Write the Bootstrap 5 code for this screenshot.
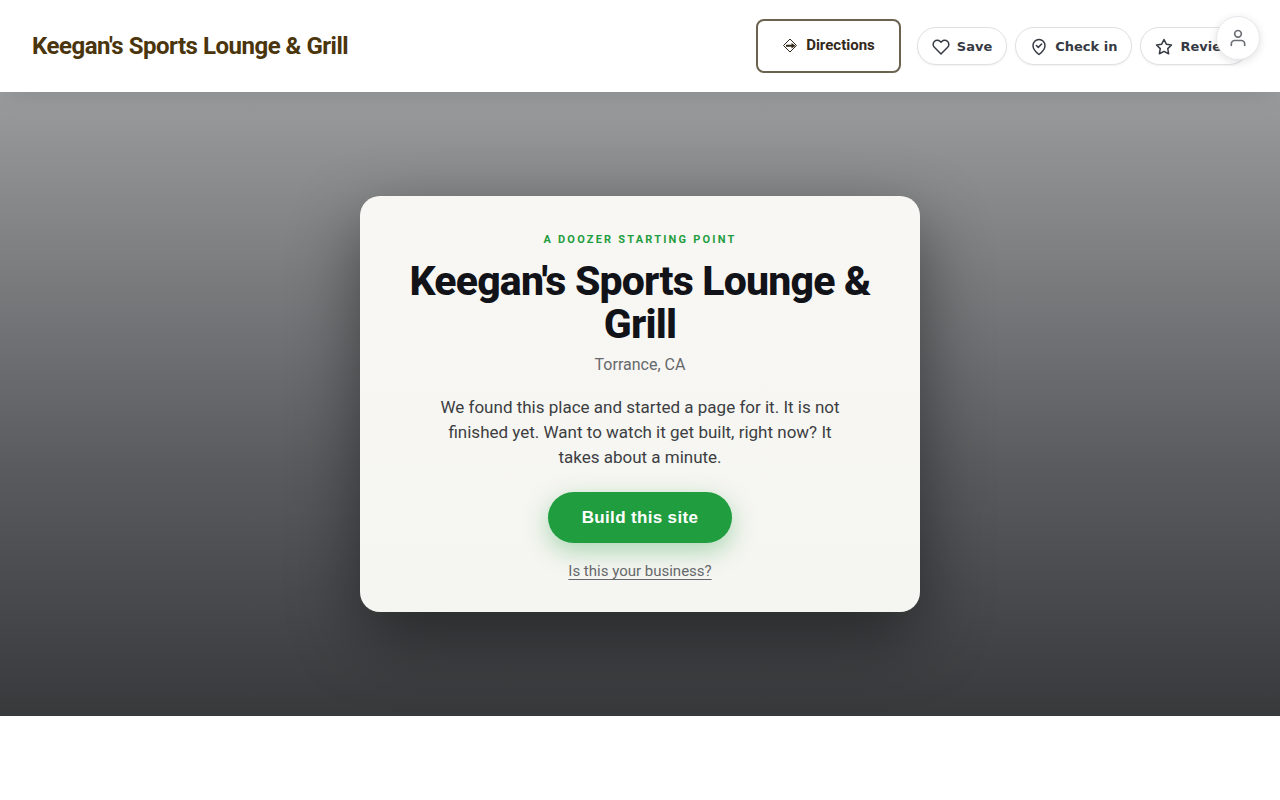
<!DOCTYPE html>
<html lang="en">
<head>
<meta charset="utf-8">
<meta name="viewport" content="width=device-width, initial-scale=1">
<title>Keegan's Sports Lounge &amp; Grill</title>
<link href="https://cdn.jsdelivr.net/npm/bootstrap@5.3.0/dist/css/bootstrap.min.css" rel="stylesheet">
<style>
  body { font-family: Roboto, sans-serif; background: #fff; }
  .site-header { padding: 19px 32px; box-shadow: 0 8px 24px -8px rgba(0,0,0,.12); position: relative; z-index: 2; }
  .site-brand { font-size: 24px; line-height: 36px; font-weight: 700; letter-spacing: -.02em; color: #4a350c; }
  .btn-directions { border: 2px solid #6b6350; border-radius: 8px; padding: 14px 24px 16px; font-size: 15px; line-height: 20px; font-weight: 700; color: #33291a; }
  .btn-pill { gap: 7px; font-family: "DejaVu Sans", sans-serif; font-size: 13px; line-height: 20px; font-weight: 700; color: #363a43; background: #fff; border: 1px solid #e0e1e4; border-radius: 19px; padding: 9px 14px 7px; box-shadow: 0 1px 2px rgba(0,0,0,.06); }
  .btn-user { top: 16px; right: 20px; width: 44px; height: 44px; background: #fff; border: 1px solid #e5e7eb; color: #6b6e74; box-shadow: 0 2px 8px rgba(0,0,0,.12); z-index: 10; }
  .hero { min-height: 78vh; padding: 48px 24px; background: linear-gradient(180deg, #9a9b9c 0%, #595b5e 60%, #37393b 100%); }
  .claim-card { max-width: 560px; padding: 35px 40px 29px; border-radius: 20px; background: linear-gradient(180deg, #f8f7f3, #f5f5f1); box-shadow: 0 24px 70px rgba(0,0,0,.45); }
  .claim-eyebrow { font-size: 11px; line-height: 18px; font-weight: 700; letter-spacing: .2em; color: #1f9d3f; margin-bottom: 11px; }
  .claim-title { font-size: 41px; line-height: 43px; font-weight: 800; letter-spacing: -.02em; color: #111318; margin-bottom: 7px; }
  .claim-place { font-size: 16px; line-height: 24px; color: #66686b; margin-bottom: 18px; }
  .claim-text { max-width: 400px; font-size: 17px; line-height: 25px; color: #3c3e42; margin-bottom: 22px; }
  .btn-build { font-family: "Liberation Sans", sans-serif; font-size: 17px; line-height: 19px; font-weight: 700; letter-spacing: .02em; color: #fff; background: #1f9d3f; border: 0; padding: 16px 34px; box-shadow: 0 8px 24px rgba(31,157,63,.35); }
  .btn-build:hover { background: #1a8836; color: #fff; }
  .claim-link { font-size: 15px; line-height: 22px; color: #66686b; text-underline-offset: 3px; }
</style>
</head>
<body>
<header class="site-header bg-white d-flex align-items-center justify-content-between">
  <a class="site-brand text-decoration-none" href="#">Keegan's Sports Lounge &amp; Grill</a>
  <div class="d-flex align-items-center gap-3">
    <button type="button" class="btn btn-directions d-flex align-items-center gap-2">
      <svg width="16" height="16" viewBox="0 0 16 16" fill="none" stroke="currentColor" aria-hidden="true"><path d="M8 2 14.500 8.500 8 15 1.500 8.500Z"/><path d="M4 9.800V7.800H9.500V6L13.500 8.800L9.500 11.500V9.800Z" fill="currentColor" stroke="none"/></svg>
      Directions
    </button>
    <div class="d-flex gap-2">
      <button type="button" class="btn btn-pill d-flex align-items-center">
        <svg width="18" height="18" viewBox="0 0 24 24" fill="none" stroke="currentColor" stroke-width="2" stroke-linecap="round" stroke-linejoin="round" aria-hidden="true"><path d="M20.840 4.610a5.500 5.500 0 0 0-7.780 0L12 5.670l-1.060-1.060a5.500 5.500 0 0 0-7.780 7.780L12 21.230l8.840-8.840a5.500 5.500 0 0 0 0-7.780z"/></svg>Save
      </button>
      <button type="button" class="btn btn-pill d-flex align-items-center">
        <svg width="18" height="18" viewBox="0 0 24 24" fill="none" stroke="currentColor" stroke-width="2" stroke-linecap="round" stroke-linejoin="round" aria-hidden="true"><path d="M20 10c0 6-8 12-8 12s-8-6-8-12a8 8 0 0 1 16 0Z"/><path d="m8.500 10 2.500 2.500 4.500-4.500"/></svg>Check in
      </button>
      <button type="button" class="btn btn-pill d-flex align-items-center">
        <svg width="18" height="18" viewBox="0 0 24 24" fill="none" stroke="currentColor" stroke-width="2" stroke-linecap="round" stroke-linejoin="round" aria-hidden="true"><path d="m12 2 3.090 6.260L22 9.270l-5 4.870 1.180 6.880L12 17.770l-6.180 3.250L7 14.140 2 9.270l6.910-1.010Z"/></svg>Review
      </button>
    </div>
  </div>
</header>
<button type="button" class="btn btn-user position-fixed rounded-circle p-0 d-flex align-items-center justify-content-center" aria-label="Account">
  <svg width="20" height="20" viewBox="0 0 24 24" fill="none" stroke="currentColor" stroke-width="2" stroke-linecap="round" stroke-linejoin="round" aria-hidden="true"><path d="M20 21v-2a4 4 0 0 0-4-4H8a4 4 0 0 0-4 4v2"/><circle cx="12" cy="7" r="4"/></svg>
</button>
<main class="hero d-flex align-items-center justify-content-center">
  <section class="claim-card w-100 text-center">
    <p class="claim-eyebrow text-uppercase">A Doozer starting point</p>
    <h1 class="claim-title">Keegan's Sports Lounge &amp; Grill</h1>
    <p class="claim-place">Torrance, CA</p>
    <p class="claim-text mx-auto">We found this place and started a page for it. It is not finished yet. Want to watch it get built, right now? It takes about a minute.</p>
    <button type="button" class="btn btn-build rounded-pill mb-3">Build this site</button>
    <div><a class="claim-link" href="#">Is this your business?</a></div>
  </section>
</main>
<script src="https://cdn.jsdelivr.net/npm/bootstrap@5.3.0/dist/js/bootstrap.bundle.min.js"></script>
</body>
</html>
